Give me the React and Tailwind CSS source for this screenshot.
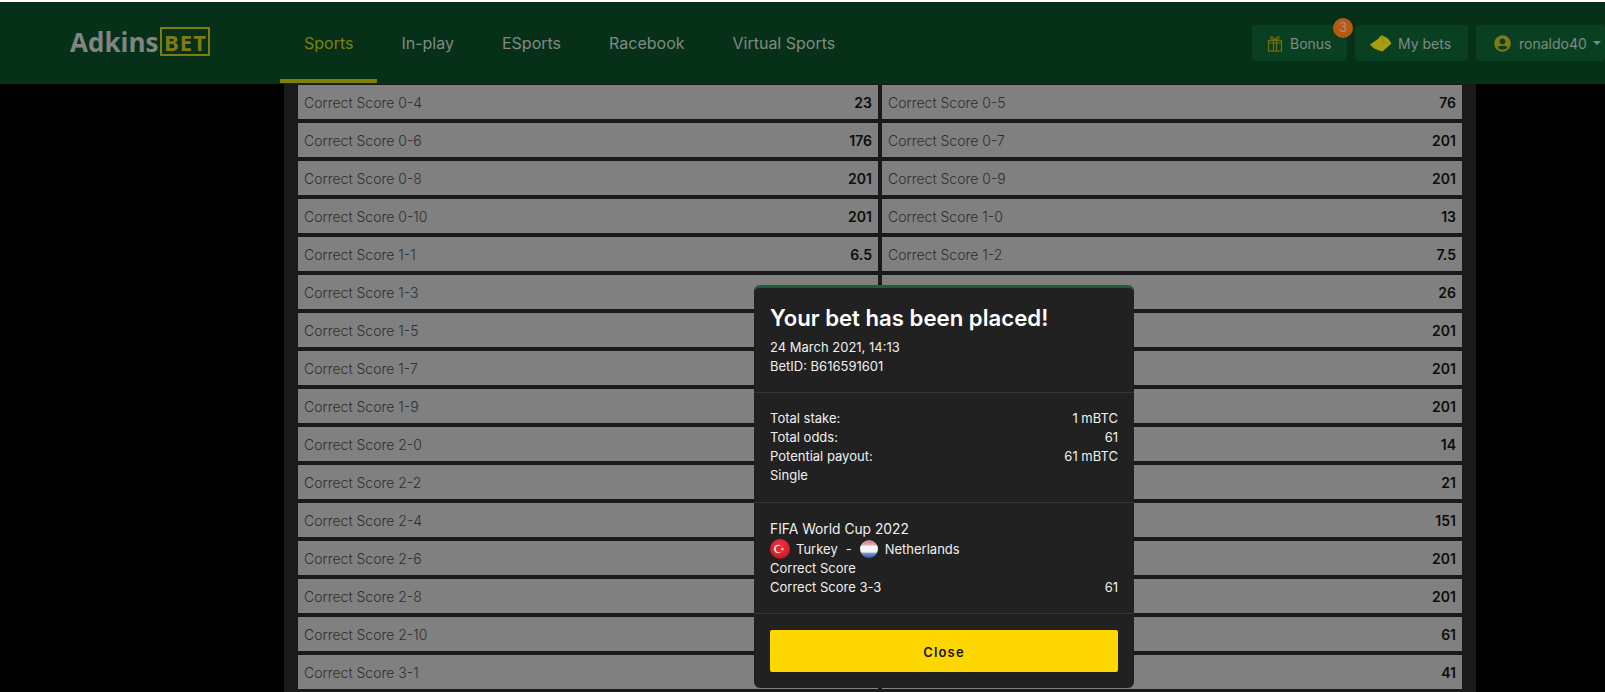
import React from "react";
import { FaUserCircle } from "react-icons/fa";

const navItems = ["Sports", "In-play", "ESports", "Racebook", "Virtual Sports"];

const rows = [
  ["0-4", "23", "0-5", "76"],
  ["0-6", "176", "0-7", "201"],
  ["0-8", "201", "0-9", "201"],
  ["0-10", "201", "1-0", "13"],
  ["1-1", "6.5", "1-2", "7.5"],
  ["1-3", "11", "1-4", "26"],
  ["1-5", "101", "1-6", "201"],
  ["1-7", "201", "1-8", "201"],
  ["1-9", "201", "1-10", "201"],
  ["2-0", "17", "2-1", "14"],
  ["2-2", "13", "2-3", "21"],
  ["2-4", "61", "2-5", "151"],
  ["2-6", "201", "2-7", "201"],
  ["2-8", "201", "2-9", "201"],
  ["2-10", "201", "3-0", "61"],
  ["3-1", "34", "3-2", "41"],
];

const OddsRow = ({ score, odds }) => {
  return (
    <div className="flex h-[34px] items-center justify-between bg-[#808080] px-[6px] text-[14px]">
      <span className="font-light text-[#2f2f2f]">Correct Score {score}</span>
      <span className="font-semibold text-[#0c0c0c]">{odds}</span>
    </div>
  );
};

const TurkeyFlag = () => (
  <svg width="20" height="20" viewBox="0 0 20 20" className="shrink-0">
    <defs>
      <radialGradient id="gloss-tr" cx="50%" cy="35%" r="65%">
        <stop offset="0%" stopColor="#f0353f" />
        <stop offset="75%" stopColor="#d91f2c" />
        <stop offset="100%" stopColor="#a81822" />
      </radialGradient>
    </defs>
    <circle cx="10" cy="10" r="10" fill="url(#gloss-tr)" />
    <circle cx="8" cy="10" r="4.2" fill="#f6d9da" />
    <circle cx="9.2" cy="10" r="3.3" fill="#e02a36" />
    <path d="M12.3 8.4l.5 1.2 1.3 0-1 .8.4 1.3-1.2-.8-1.1.8.4-1.3-1-.8 1.3 0z" fill="#f6d9da" />
  </svg>
);

const NetherlandsFlag = () => (
  <svg width="18" height="18" viewBox="0 0 18 18" className="shrink-0">
    <defs>
      <linearGradient id="stripes-nl" x1="0" y1="0" x2="0" y2="1">
        <stop offset="0%" stopColor="#c9808a" />
        <stop offset="24%" stopColor="#e2a0a4" />
        <stop offset="36%" stopColor="#f7f7f7" />
        <stop offset="66%" stopColor="#f4f4f8" />
        <stop offset="76%" stopColor="#6f8bd0" />
        <stop offset="100%" stopColor="#3c5aa6" />
      </linearGradient>
    </defs>
    <circle cx="9" cy="9" r="9" fill="url(#stripes-nl)" />
  </svg>
);

const GiftIcon = () => (
  <svg width="16" height="17" viewBox="0 0 16 17" fill="none" stroke="#716e10" strokeWidth="1.2" className="shrink-0">
    <rect x="1.5" y="5.5" width="13" height="10.5" />
    <path d="M1.5 8h13M6.5 5.5V16M9.5 5.5V16" />
    <path d="M8 5.2C6 1 3.5 1 4 3.2c.3 1.3 2 2 4 2zM8 5.2c2-4.2 4.5-4.2 4-2-.3 1.3-2 2-4 2z" />
  </svg>
);

const TicketIcon = () => (
  <svg width="22" height="17" viewBox="0 0 22 17" fill="#a89c10" className="shrink-0">
    <path d="M0 9.5 8 4l3.5-4 6.5 3.5 3.5 5L12.5 16.5 9 15.5 4 13.5z" />
    <path d="M11.5 1 14.5 9" fill="none" stroke="#7d750f" strokeWidth=".7" />
  </svg>
);

const Header = () => {
  return (
    <header className="flex h-[84px] shrink-0 items-stretch border-t-2 border-white bg-[#073019]">
      <div className="ml-[70px] flex w-[210px] items-center pb-[3px]">
        <span className="font-['Open_Sans'] text-[26px] leading-none font-bold text-[#808582]">Adkins</span>
        <span className="ml-[2px] flex h-[29px] w-[50px] items-center justify-center border-2 border-[#7f7a12] font-['Open_Sans'] text-[22px] leading-none font-bold tracking-[1px] text-[#7f7a12]">
          BET
        </span>
      </div>
      <nav className="mb-[1px] flex">
        {navItems.map((item, index) => (
          <a
            key={item}
            className={`flex items-center border-b-4 px-6 pt-[4px] text-[16px] ${
              index === 0 ? "border-[#80800f] text-[#80800f]" : "border-transparent text-[#808a84]"
            }`}
          >
            {item}
          </a>
        ))}
      </nav>
      <div className="ml-auto flex items-start gap-2 pt-[23px]">
        <div className="relative flex h-[36px] w-[95px] items-center gap-[7px] rounded-sm bg-[#0a4022] pl-[15px] text-[14px] text-[#808a84]">
          <GiftIcon />
          Bonus
          <span className="absolute top-[-7px] right-[-6px] flex h-5 w-5 items-center justify-center rounded-full bg-[#b7590f] text-[13px] text-[#a59a80]">
            3
          </span>
        </div>
        <div className="flex h-[36px] w-[113px] items-center gap-[6px] rounded-sm bg-[#0a4022] pl-[15px] text-[14px] text-[#808a84]">
          <TicketIcon />
          My bets
        </div>
        <div className="flex h-[36px] w-[129px] items-center gap-2 rounded-sm bg-[#0a4022] pl-[18px] text-[14px] text-[#808a84]">
          <FaUserCircle size={17} className="text-[#7f7a12]" />
          ronaldo40
          <span className="-ml-[2px] h-0 w-0 border-x-[4px] border-t-[4px] border-x-transparent border-t-[#808a84]" />
        </div>
      </div>
    </header>
  );
};

const BetModal = () => {
  return (
    <div className="absolute top-[285px] left-[754px] w-[380px] rounded-md border-t-[3px] border-[#1d5c36] bg-[#212121] text-[13px] leading-[19px] text-[#f0f0f0]">
      <div className="border-b border-[#353535] px-4 pt-4 pb-4">
        <h2 className="mb-[7px] text-[22.2px] leading-[27px] font-semibold text-white">Your bet has been placed!</h2>
        <p>24 March 2021, 14:13</p>
        <p>BetID: B616591601</p>
      </div>
      <div className="border-b border-[#353535] px-4 pt-4 pb-[17px]">
        <div className="flex justify-between">
          <span>Total stake:</span>
          <span>1 mBTC</span>
        </div>
        <div className="flex justify-between">
          <span>Total odds:</span>
          <span>61</span>
        </div>
        <div className="flex justify-between">
          <span>Potential payout:</span>
          <span>61 mBTC</span>
        </div>
        <p>Single</p>
      </div>
      <div className="border-b border-[#353535] px-4 pt-[17px] pb-4">
        <p className="text-[13.8px]">FIFA World Cup 2022</p>
        <div className="flex items-center">
          <TurkeyFlag />
          <span className="ml-[6px]">Turkey</span>
          <span className="ml-[8px]">-</span>
          <span className="ml-[8px]">
            <NetherlandsFlag />
          </span>
          <span className="ml-[7px]">Netherlands</span>
        </div>
        <p>Correct Score</p>
        <div className="flex justify-between">
          <span>Correct Score 3-3</span>
          <span>61</span>
        </div>
      </div>
      <div className="p-4">
        <button className="h-[42px] w-full rounded-[2px] bg-[#ffd700] pt-[2px] text-[13px] font-semibold tracking-[1.2px] text-[#111]">
          Close
        </button>
      </div>
    </div>
  );
};

const App = () => {
  return (
    <div className="relative flex h-screen flex-col overflow-hidden bg-black font-['Inter',sans-serif]">
      <Header />
      <main className="ml-[284px] w-[1192px] flex-1 bg-[#1a1a1a] px-[14px] pt-[1px]">
        <div className="grid grid-cols-2 gap-x-1 gap-y-1">
          {rows.map(([leftScore, leftOdds, rightScore, rightOdds]) => (
            <React.Fragment key={leftScore}>
              <OddsRow score={leftScore} odds={leftOdds} />
              <OddsRow score={rightScore} odds={rightOdds} />
            </React.Fragment>
          ))}
        </div>
      </main>
      <BetModal />
    </div>
  );
};

export default App;
